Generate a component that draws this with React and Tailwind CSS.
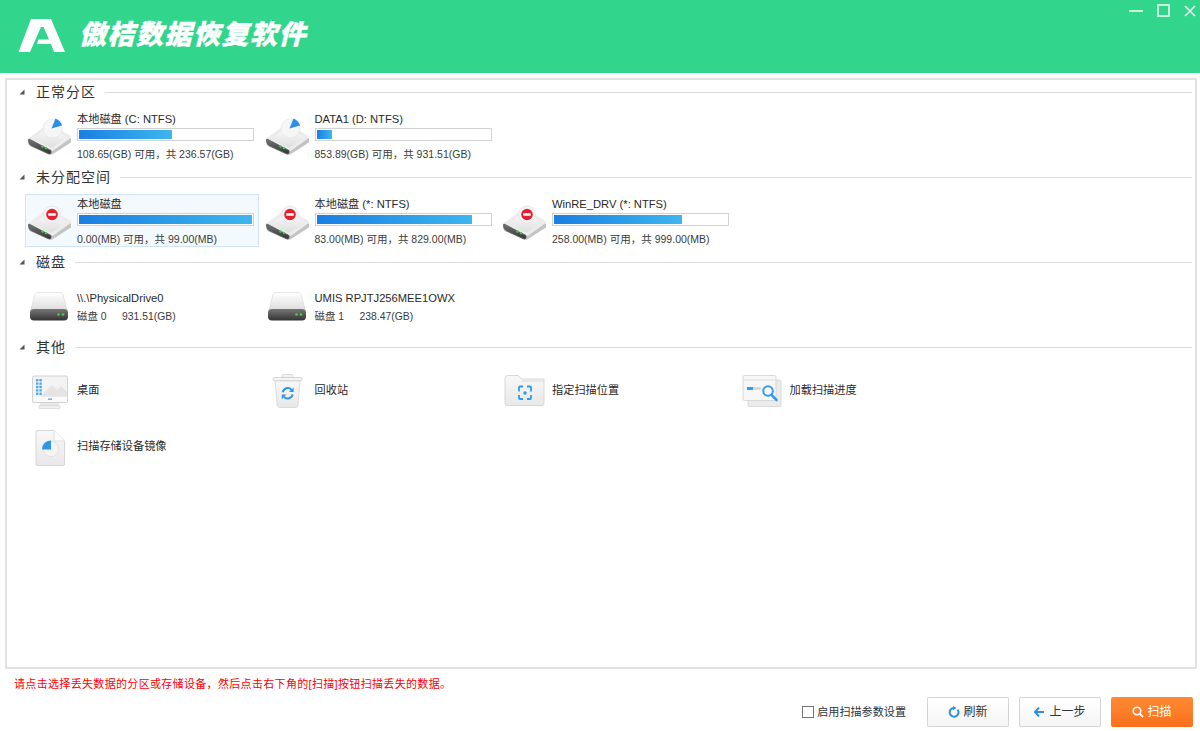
import React from "react";

const FONT = '"Liberation Sans","Noto Sans CJK SC",sans-serif';

function Defs() {
  return (
    <svg width="0" height="0" className="absolute">
      <defs>
        <linearGradient id="diskTop" x1="0" y1="0" x2="0" y2="1">
          <stop offset="0" stopColor="#ffffff" />
          <stop offset="1" stopColor="#dcdcdc" />
        </linearGradient>
        <linearGradient id="diskDark" x1="0" y1="0" x2="0" y2="1">
          <stop offset="0" stopColor="#777777" />
          <stop offset="1" stopColor="#333333" />
        </linearGradient>
        <linearGradient id="paper" x1="0" y1="0" x2="0" y2="1">
          <stop offset="0" stopColor="#f8f8f8" />
          <stop offset="1" stopColor="#e8e8e8" />
        </linearGradient>
      </defs>
    </svg>
  );
}

function PartitionIcon({ kind }) {
  return (
    <svg width="48" height="48" viewBox="0 0 48 48" className="shrink-0">
      <path d="M3 28 L24 39 L44 27 L44 30 L26 41.5 Q24.5 42 23 41.5 L4 33 Z" fill="#c4c4c4" stroke="#c4c4c4" strokeWidth="2" strokeLinejoin="round" />
      <path d="M3.5 27.5 L23 13 L43.5 25 L26 37.5 Z" fill="url(#diskTop)" stroke="#ececec" strokeWidth="3" strokeLinejoin="round" />
      <path d="M2.5 28 Q2.5 26.5 4 27.5 L25 38.5 L25 41 Q24 42.5 22 41.5 L5 33.5 Q2.5 32 2.5 28Z" fill="url(#diskDark)" stroke="#555555" strokeWidth="0.8" strokeLinejoin="round" />
      <circle cx="16.5" cy="34.5" r="1.2" fill="#44cf4e" />
      <circle cx="20" cy="36" r="1.2" fill="#44cf4e" />
      {kind === "pie" ? (
        <>
          <circle cx="26.5" cy="16.5" r="9.5" fill="#f6f6f6" stroke="#e2e2e2" strokeWidth="0.6" />
          <path d="M25.5 16.5 L29.5 6.5 A10.5 10.5 0 0 1 36 13.5 Z" fill="#2a8fe8" />
        </>
      ) : (
        <>
          <circle cx="26" cy="17.5" r="8.5" fill="#f6f6f6" stroke="#dddddd" strokeWidth="0.6" />
          <circle cx="26" cy="17.5" r="5.8" fill="#e5202e" />
          <rect x="22.2" y="16.3" width="7.6" height="2.4" rx="0.4" fill="#ffffff" />
        </>
      )}
    </svg>
  );
}

function DriveIcon() {
  return (
    <svg width="48" height="48" viewBox="0 0 48 48" className="shrink-0">
      <path d="M9 12.5 Q9.5 10.5 12 10.5 H34 Q36.5 10.5 37 12.5 L41.5 29 H4.5 Z" fill="url(#diskTop)" stroke="#d6d6d6" strokeWidth="0.6" />
      <rect x="4" y="27" width="38" height="11.5" rx="4" fill="url(#diskDark)" />
      <circle cx="32.5" cy="32.5" r="1.3" fill="#44cf4e" />
      <circle cx="37" cy="32.5" r="1.3" fill="#44cf4e" />
    </svg>
  );
}

function DesktopIcon() {
  const dots = [];
  for (let r = 0; r < 5; r++) {
    for (let c = 0; c < 2; c++) {
      dots.push(<rect key={r + "-" + c} x={10 + c * 3.4} y={12 + r * 3.4} width="2.4" height="2.4" rx="0.4" fill="#4aa8f0" />);
    }
  }
  return (
    <svg width="48" height="48" viewBox="0 0 48 48" className="shrink-0">
      <rect x="14" y="35" width="19" height="4" fill="#e9e9e9" />
      <rect x="13" y="38.5" width="21" height="3" rx="1" fill="#f0f0f0" stroke="#cfcfcf" strokeWidth="0.6" />
      <rect x="6.5" y="9" width="35" height="26.5" rx="1.5" fill="#f3f3f3" stroke="#d2d2d2" />
      <path d="M15 29 L26 18 L31 23 L35 19 L41 25 V29.5 H15Z" fill="#e4e4e4" />
      <rect x="7" y="30" width="34" height="5" fill="#fafafa" />
      {dots}
      <rect x="22" y="31.5" width="4" height="1.3" fill="#4aa8f0" />
    </svg>
  );
}

function TrashIcon() {
  return (
    <svg width="48" height="48" viewBox="0 0 48 48" className="shrink-0">
      <rect x="18" y="7.5" width="11" height="3.5" rx="1.2" fill="#f2f2f2" stroke="#cccccc" strokeWidth="0.7" />
      <rect x="9" y="10.5" width="29" height="3.2" rx="1.4" fill="#f4f4f4" stroke="#c8c8c8" strokeWidth="0.7" />
      <path d="M11 14 H36 L34 38 Q33.8 40.5 31 40.5 H16 Q13.4 40.5 13.2 38 Z" fill="url(#paper)" stroke="#d0d0d0" strokeWidth="0.7" />
      <path d="M18.8 25.2 A5 5 0 0 1 27.5 22.8" fill="none" stroke="#2f95ea" strokeWidth="2" />
      <path d="M29.6 20.4 V25 H25 Z" fill="#2f95ea" />
      <path d="M28.6 27.4 A5 5 0 0 1 20 29.8" fill="none" stroke="#2f95ea" strokeWidth="2" />
      <path d="M17.8 32.2 V27.6 H22.4 Z" fill="#2f95ea" />
    </svg>
  );
}

function FolderIcon() {
  return (
    <svg width="48" height="48" viewBox="0 0 48 48" className="shrink-0">
      <path d="M4 11 Q4 8.5 6.5 8.5 H17 L21 12 H43 V36.5 Q43 38.5 41 38.5 H6 Q4 38.5 4 36.5Z" fill="url(#paper)" stroke="#cfcfcf" strokeWidth="0.8" />
      <path d="M21 14 H43" stroke="#d8d8d8" strokeWidth="1" />
      <g fill="none" stroke="#2f9bf0" strokeWidth="1.8">
        <path d="M18 24.5 V20.5 Q18 19.5 19 19.5 H22" />
        <path d="M26 19.5 H29 Q30 19.5 30 20.5 V24.5" />
        <path d="M30 28 V31 Q30 32 29 32 H26" />
        <path d="M22 32 H19 Q18 32 18 31 V28" />
      </g>
      <circle cx="24" cy="26" r="1.7" fill="#2f9bf0" />
    </svg>
  );
}

function ProgressIcon() {
  return (
    <svg width="48" height="48" viewBox="0 0 48 48" className="shrink-0">
      <rect x="9" y="13" width="33" height="26.5" rx="1.5" fill="#ececec" stroke="#d4d4d4" strokeWidth="0.8" />
      <rect x="4" y="8.5" width="33" height="25" rx="1.5" fill="#f7f7f7" stroke="#d0d0d0" strokeWidth="0.8" />
      <path d="M4 13 H37" stroke="#dddddd" strokeWidth="1" />
      <rect x="8" y="20" width="6" height="3" fill="#2f9bf0" />
      <rect x="14" y="20" width="8" height="3" fill="#dadada" />
      <circle cx="29" cy="24" r="4.8" fill="#ffffff" stroke="#2f9bf0" strokeWidth="2" />
      <path d="M32.5 27.8 L37.5 33" stroke="#2f9bf0" strokeWidth="2.6" strokeLinecap="round" />
    </svg>
  );
}

function ImageIcon() {
  return (
    <svg width="48" height="48" viewBox="0 0 48 48" className="shrink-0">
      <path d="M11.5 7.5 H28 L38.5 18 V41 Q38.5 42.5 37 42.5 H11.5 Q10 42.5 10 41 V9 Q10 7.5 11.5 7.5Z" fill="url(#paper)" stroke="#cfcfcf" strokeWidth="0.8" />
      <path d="M28 7.5 V18 H38.5" fill="#fbfbfb" stroke="#dcdcdc" strokeWidth="0.8" />
      <circle cx="25" cy="26" r="7.7" fill="#f4f4f4" stroke="#dddddd" strokeWidth="0.8" />
      <path d="M25 26.5 H16 A8.6 8.6 0 0 1 25 17.5 Z" fill="#2f95ea" />
    </svg>
  );
}

function Triangle() {
  return (
    <svg width="6" height="6" viewBox="0 0 6 6" className="shrink-0">
      <path d="M5.5 0.5 V5.5 H0.5 Z" fill="#555555" />
    </svg>
  );
}

function SectionHeader({ title }) {
  return (
    <div className="flex h-5 items-center">
      <span className="ml-[12px] mr-[11px] flex w-[6px]"><Triangle /></span>
      <span className="text-[14px] leading-5 tracking-[1px] text-[#333333]">{title}</span>
      <span className="ml-[9px] mr-[3px] h-px flex-1 bg-[#dcdcdc]" />
    </div>
  );
}

function Partition({ name, fill, stat, selected, kind }) {
  return (
    <div className={"flex h-[53px] w-[234px] border " + (selected ? "border-[#cfe4f5] bg-[#f4f9fd]" : "border-transparent")}>
      <div className="flex h-full items-center"><PartitionIcon kind={kind} /></div>
      <div className="ml-[3px] flex flex-col">
        <div className="h-[14px] pt-px text-[11.2px] leading-[16px] text-[#2a2a2a]">{name}</div>
        <div className="mt-[4px] h-[14px] w-[177px] border border-[#d2d2d2] bg-white p-px">
          <div className="h-full bg-gradient-to-r from-[#1a7fe2] to-[#3db6ee]" style={{ width: fill + "%" }} />
        </div>
        <div className="mt-[6px] text-[10.5px] leading-[14px] text-[#3b3b3b]">{stat}</div>
      </div>
    </div>
  );
}

function Drive({ name, sub1, sub2 }) {
  return (
    <div className="flex h-[53px] w-[234px] items-center border border-transparent">
      <DriveIcon />
      <div className="ml-[3px] mt-[3px] flex flex-col">
        <div className="text-[11.2px] leading-[16px] text-[#2a2a2a]">{name}</div>
        <div className="mt-[3px] flex text-[10.4px] leading-[16px] text-[#3b3b3b]">
          <span className="w-[45px]">{sub1}</span>
          <span>{sub2}</span>
        </div>
      </div>
    </div>
  );
}

function Other({ icon, label }) {
  return (
    <div className="flex h-[53px] w-[234px] items-center border border-transparent">
      {icon}
      <span className="ml-[3px] mt-[-2px] text-[11.2px] leading-4 text-[#2a2a2a]">{label}</span>
    </div>
  );
}

function Row({ children }) {
  return <div className="ml-[18px] mt-[7px] mb-[5px] grid grid-cols-[repeat(4,237.5px)]">{children}</div>;
}

export default function App() {
  return (
    <div className="flex h-[731px] w-[1200px] flex-col overflow-hidden bg-white" style={{ fontFamily: FONT }}>
      <Defs />
      <header className="relative flex h-[73px] shrink-0 items-center bg-[#32d58c]">
        <svg width="48" height="34" viewBox="0 0 48 34" className="ml-[18px] mt-[-2px]">
          <path d="M13 0 H33 L47 33 H36 L33 25 H19 L20.5 20.5 H31 L25.5 8 H23 L12 33 H0.5 Z" fill="#ffffff" />
        </svg>
        <span className="ml-[13px] mt-[-2px] text-[27px] font-black italic leading-none tracking-[1.5px] text-white [-webkit-text-stroke:0.4px_white]">傲桔数据恢复软件</span>
        <div className="absolute right-[4px] top-[4px] flex items-center gap-[14px]">
          <span className="h-[2px] w-[14px] bg-[#c9f3df]" />
          <span className="h-[13px] w-[13px] border-2 border-[#c9f3df]" />
          <svg width="12" height="12" viewBox="0 0 12 12"><path d="M1 1 L11 11 M11 1 L1 11" stroke="#e6faf0" strokeWidth="1.6" /></svg>
        </div>
      </header>

      <main className="ml-[5px] mr-[3px] mt-[5px] h-[591px] shrink-0 border-2 border-[#e2e2e2] pt-[2px]">
        <SectionHeader title="正常分区" />
        <Row>
          <Partition kind="pie" name="本地磁盘 (C: NTFS)" fill={54} stat="108.65(GB) 可用，共 236.57(GB)" />
          <Partition kind="pie" name="DATA1 (D: NTFS)" fill={9} stat="853.89(GB) 可用，共 931.51(GB)" />
        </Row>
        <SectionHeader title="未分配空间" />
        <Row>
          <Partition selected kind="stop" name="本地磁盘" fill={100} stat="0.00(MB) 可用，共 99.00(MB)" />
          <Partition kind="stop" name="本地磁盘 (*: NTFS)" fill={90} stat="83.00(MB) 可用，共 829.00(MB)" />
          <Partition kind="stop" name="WinRE_DRV (*: NTFS)" fill={74} stat="258.00(MB) 可用，共 999.00(MB)" />
        </Row>
        <SectionHeader title="磁盘" />
        <Row>
          <Drive name="\\.\PhysicalDrive0" sub1="磁盘 0" sub2="931.51(GB)" />
          <Drive name="UMIS RPJTJ256MEE1OWX" sub1="磁盘 1" sub2="238.47(GB)" />
        </Row>
        <SectionHeader title="其他" />
        <div className="ml-[18px] mt-[7px] grid grid-cols-[repeat(4,237.5px)] gap-y-[3px]">
          <Other icon={<DesktopIcon />} label="桌面" />
          <Other icon={<TrashIcon />} label="回收站" />
          <Other icon={<FolderIcon />} label="指定扫描位置" />
          <Other icon={<ProgressIcon />} label="加载扫描进度" />
          <Other icon={<ImageIcon />} label="扫描存储设备镜像" />
        </div>
      </main>

      <footer className="relative flex-1">
        <p className="ml-[14px] mt-[7px] text-[11px] leading-4 tracking-[0.33px] text-[#ff0000]">
          请点击选择丢失数据的分区或存储设备，然后点击右下角的[扫描]按钮扫描丢失的数据。
        </p>
        <div className="mr-[7px] mt-[5px] flex items-center justify-end">
          <label className="mr-[21px] flex items-center text-[11.1px] text-[#333333]">
            <span className="mr-[3px] h-[12px] w-[12px] border border-[#777777] bg-white" />
            启用扫描参数设置
          </label>
          <button className="flex h-[30px] w-[82px] items-center justify-center rounded-[2px] border border-[#d5d5d5] bg-gradient-to-b from-white to-[#f5f5f5] text-[12px] text-[#333333]">
            <svg width="12" height="12" viewBox="0 0 12 12" className="mr-[3px]">
              <path d="M9.6 3.6 A4.4 4.4 0 1 1 5.4 1.9" fill="none" stroke="#2f8fdf" strokeWidth="2" />
              <path d="M5 0 L8.5 2 L5 4.2Z" fill="#2f8fdf" />
            </svg>
            刷新
          </button>
          <button className="ml-[10px] flex h-[30px] w-[82px] items-center justify-center rounded-[2px] border border-[#d5d5d5] bg-gradient-to-b from-white to-[#f5f5f5] text-[12px] text-[#333333]">
            <svg width="11" height="10" viewBox="0 0 11 10" className="mr-[4px]">
              <path d="M5 0.5 L1 5 L5 9.5 M1.5 5 H10" fill="none" stroke="#2f8fdf" strokeWidth="2" />
            </svg>
            上一步
          </button>
          <button className="ml-[10px] flex h-[30px] w-[82px] items-center justify-center rounded-[2px] bg-gradient-to-b from-[#ff8a33] to-[#fb6f1a] text-[12px] text-white">
            <svg width="12" height="12" viewBox="0 0 12 12" className="mr-[3px]">
              <circle cx="5" cy="5" r="3.8" fill="none" stroke="#ffffff" strokeWidth="1.6" />
              <path d="M8 8 L11 11" stroke="#ffffff" strokeWidth="2" />
            </svg>
            扫描
          </button>
        </div>
      </footer>
    </div>
  );
}
